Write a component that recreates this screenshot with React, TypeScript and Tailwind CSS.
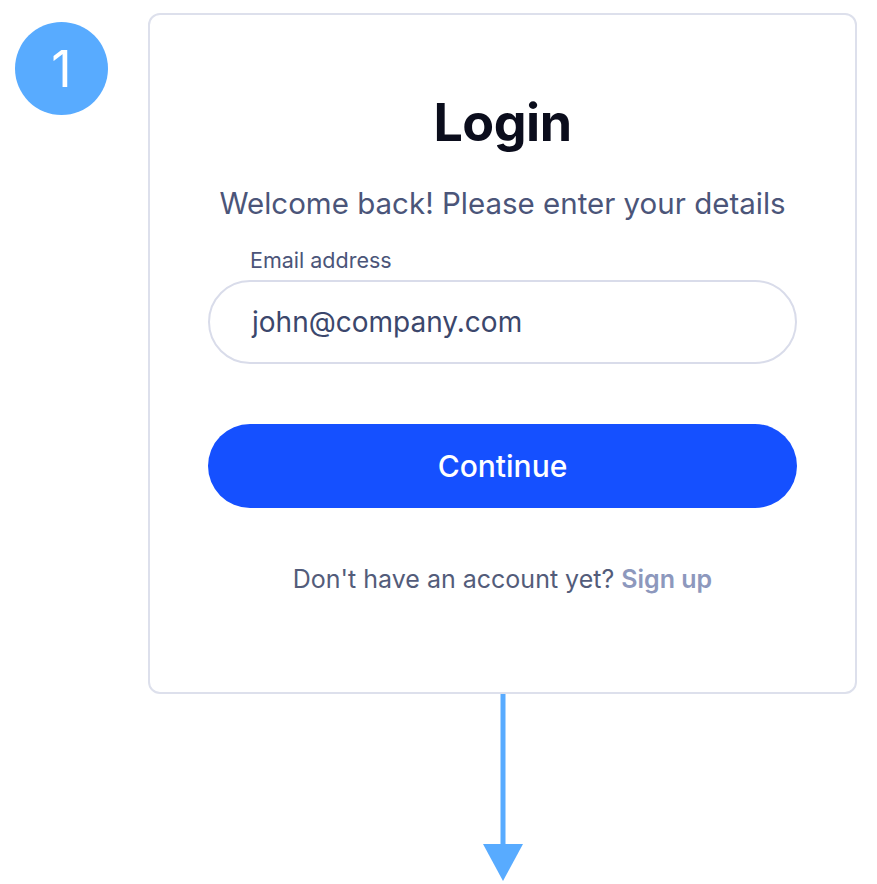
import React from "react";

const font = { fontFamily: "Inter, 'Noto Sans', sans-serif" };

function StepBadge({ n }: { n: number }) {
  return (
    <div className="w-[93px] h-[93px] rounded-full bg-[#58abff] flex items-center justify-center text-white text-[50px] leading-none font-normal">
      {n}
    </div>
  );
}

function DownArrow() {
  return (
    <svg width="44" height="188" viewBox="0 0 44 188" className="block">
      <rect x="19.5" y="0" width="5" height="152" fill="#58abff" />
      <polygon points="2,150 42,150 22,187" fill="#58abff" />
    </svg>
  );
}

export default function App() {
  return (
    <div className="w-[877px] h-[884px] bg-white flex" style={font}>
      {/* step number */}
      <div className="pl-[15px] pt-[22px]">
        <StepBadge n={1} />
      </div>

      {/* card + arrow */}
      <div className="ml-[40px] pt-[13px] w-[709px] flex flex-col items-center">
        <div className="w-[709px] h-[681px] rounded-[12px] border-2 border-[#dde0ec] bg-white flex flex-col items-center px-[58px]">
          <h1 className="mt-[82px] text-[52px] leading-none font-bold text-[#0b0d1c] tracking-[-0.5px]">
            Login
          </h1>
          <p className="mt-[40px] text-[29.5px] leading-none text-[#4b5579]">
            Welcome back! Please enter your details
          </p>

          <div className="w-full mt-[31px]">
            <label className="block pl-[42px] text-[21.5px] leading-none text-[#4b5579]">
              Email address
            </label>
            <div className="mt-[9px] h-[84px] rounded-full border-2 border-[#d9dcea] flex items-center px-[42px]">
              <span className="text-[28px] leading-none text-[#3b476c]">
                john@company.com
              </span>
            </div>

            <button className="mt-[60px] w-full h-[84px] rounded-full bg-[#1550ff] text-white text-[30px] font-medium leading-none flex items-center justify-center">
              Continue
            </button>
          </div>

          <p className="mt-[59px] text-[25px] leading-none text-[#535c7a]">
            Don't have an account yet?{" "}
            <span className="font-semibold text-[#8d98bd]">Sign up</span>
          </p>
        </div>
        <DownArrow />
      </div>
    </div>
  );
}
